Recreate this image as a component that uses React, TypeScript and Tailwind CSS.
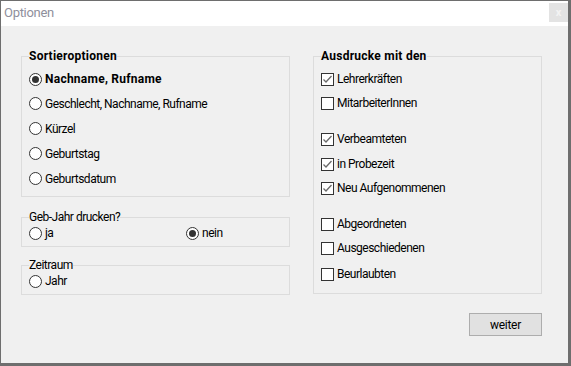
import React from "react";

const font = { fontFamily: 'Roboto, "Noto Sans", sans-serif' };

function Radio({ checked, label, bold }: { checked?: boolean; label: string; bold?: boolean }) {
  return (
    <div className="flex items-center">
      <span className="w-[13px] h-[13px] rounded-full border border-[#333333] bg-white flex items-center justify-center shrink-0">
        {checked && <span className="w-[7px] h-[7px] rounded-full bg-[#333333]" />}
      </span>
      <span
        className={`ml-[3px] text-[12px] leading-[16px] text-black ${bold ? "font-bold tracking-[0.25px]" : "tracking-[-0.5px]"}`}
      >
        {label}
      </span>
    </div>
  );
}

function Check({ checked, label }: { checked?: boolean; label: string }) {
  return (
    <div className="flex items-center">
      <span className="w-[13px] h-[13px] border border-[#333333] bg-white shrink-0 relative">
        {checked && (
          <svg width="11" height="11" viewBox="0 0 11 11" className="absolute left-0 top-0">
            <path d="M1.5 5.5 L4 8 L9.5 2" fill="none" stroke="#6a6a6a" strokeWidth="1.3" />
          </svg>
        )}
      </span>
      <span className="ml-[3px] text-[12px] leading-[16px] tracking-[-0.5px] text-black">{label}</span>
    </div>
  );
}

export default function App() {
  return (
    <div
      style={font}
      className="w-[571px] h-[366px] flex flex-col border-l border-t border-r-[3px] border-b-[3px] border-[#6e6e6e] bg-[#f0f0f0] overflow-hidden"
    >
      <div className="h-[25px] bg-white flex items-start justify-between shrink-0">
        <span className="ml-[3px] mt-[4px] text-[13px] leading-[16px] tracking-[-0.3px] text-[#8f8f9c]">Optionen</span>
        <div className="mt-[2px] w-[19px] h-[19px] bg-[#e3e3e3] flex items-center justify-center text-[11px] font-bold leading-none text-[#f3f3f3]">
          x
        </div>
      </div>
      <div className="flex-1 flex pl-[20px]">
        <div className="w-[269px] flex flex-col">
          <fieldset className="mt-[22px] border border-[#dcdcdc] pl-[7px] pt-[3px] pb-[5px]">
            <legend className="text-[12px] leading-[16px] tracking-[0.25px] font-bold text-black">Sortieroptionen</legend>
            <div className="h-[24px] flex items-center">
              <Radio checked bold label="Nachname, Rufname" />
            </div>
            <div className="h-[25px] flex items-center">
              <Radio label="Geschlecht, Nachname, Rufname" />
            </div>
            <div className="h-[25px] flex items-center">
              <Radio label="Kürzel" />
            </div>
            <div className="h-[25px] flex items-center">
              <Radio label="Geburtstag" />
            </div>
            <div className="h-[25px] flex items-center">
              <Radio label="Geburtsdatum" />
            </div>
          </fieldset>
          <fieldset className="mt-[12px] border border-[#dcdcdc] pl-[7px] pb-[5px]">
            <legend className="text-[12px] leading-[16px] tracking-[-0.5px] text-black">Geb-Jahr drucken?</legend>
            <div className="h-[16px] flex items-center">
              <div className="w-[157px]">
                <Radio label="ja" />
              </div>
              <Radio checked label="nein" />
            </div>
          </fieldset>
          <fieldset className="mt-[10px] border border-[#dcdcdc] pl-[7px] pb-[5px]">
            <legend className="text-[12px] leading-[16px] tracking-[-0.5px] text-black">Zeitraum</legend>
            <div className="h-[16px] flex items-center">
              <Radio label="Jahr" />
            </div>
          </fieldset>
        </div>
        <div className="ml-[23px] w-[229px] flex flex-col">
          <fieldset className="mt-[22px] border border-[#dcdcdc] pl-[7px] pt-[3px] pb-[7px]">
            <legend className="text-[12px] leading-[16px] tracking-[0.25px] font-bold text-black">Ausdrucke mit den</legend>
            <div className="h-[24px] flex items-center">
              <Check checked label="Lehrerkräften" />
            </div>
            <div className="h-[24px] flex items-center">
              <Check label="MitarbeiterInnen" />
            </div>
            <div className="mt-[12px] h-[24px] flex items-center">
              <Check checked label="Verbeamteten" />
            </div>
            <div className="mt-[1px] h-[24px] flex items-center">
              <Check checked label="in Probezeit" />
            </div>
            <div className="h-[24px] flex items-center">
              <Check checked label="Neu Aufgenommenen" />
            </div>
            <div className="mt-[12px] h-[24px] flex items-center">
              <Check label="Abgeordneten" />
            </div>
            <div className="h-[24px] flex items-center">
              <Check label="Ausgeschiedenen" />
            </div>
            <div className="mt-[2px] h-[24px] flex items-center">
              <Check label="Beurlaubten" />
            </div>
          </fieldset>
          <div className="flex justify-end mt-[19px]">
            <button className="w-[73px] h-[23px] border border-[#adadad] bg-[#e1e1e1] text-[12px] leading-[16px] tracking-[-0.3px] text-black">
              weiter
            </button>
          </div>
        </div>
      </div>
    </div>
  );
}
